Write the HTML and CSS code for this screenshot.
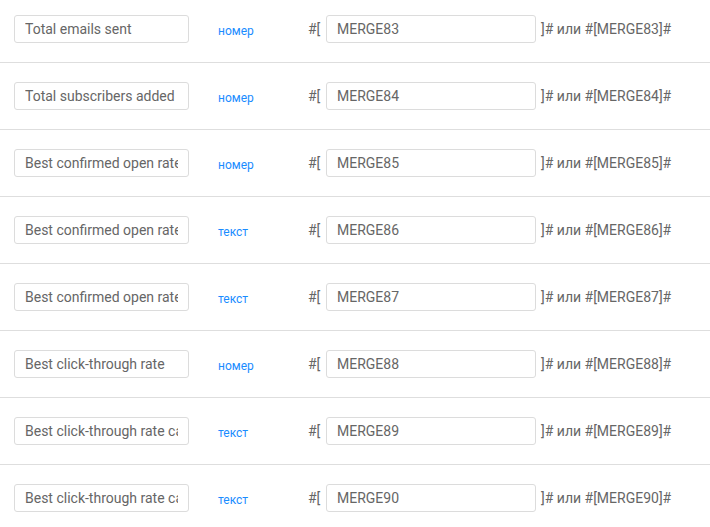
FILE: index.html
```html
<!DOCTYPE html>
<html lang="ru">
<head>
    <meta charset="UTF-8">
    <meta name="viewport" content="width=device-width, initial-scale=1.0">
    <title>Merge fields</title>
    <link rel="stylesheet" href="styles.css">
</head>
<body>
    <div class="fields">
        <div class="field-row">
            <input class="field-name" type="text" value="Total emails sent">
            <span class="field-type">номер</span>
            <span class="tag-open">#[</span>
            <input class="field-tag" type="text" value="MERGE83">
            <span class="tag-hint">]# или #[MERGE83]#</span>
        </div>
        <div class="field-row">
            <input class="field-name" type="text" value="Total subscribers added">
            <span class="field-type">номер</span>
            <span class="tag-open">#[</span>
            <input class="field-tag" type="text" value="MERGE84">
            <span class="tag-hint">]# или #[MERGE84]#</span>
        </div>
        <div class="field-row">
            <input class="field-name" type="text" value="Best confirmed open rate">
            <span class="field-type">номер</span>
            <span class="tag-open">#[</span>
            <input class="field-tag" type="text" value="MERGE85">
            <span class="tag-hint">]# или #[MERGE85]#</span>
        </div>
        <div class="field-row">
            <input class="field-name" type="text" value="Best confirmed open rate campaign">
            <span class="field-type">текст</span>
            <span class="tag-open">#[</span>
            <input class="field-tag" type="text" value="MERGE86">
            <span class="tag-hint">]# или #[MERGE86]#</span>
        </div>
        <div class="field-row">
            <input class="field-name" type="text" value="Best confirmed open rate date">
            <span class="field-type">текст</span>
            <span class="tag-open">#[</span>
            <input class="field-tag" type="text" value="MERGE87">
            <span class="tag-hint">]# или #[MERGE87]#</span>
        </div>
        <div class="field-row">
            <input class="field-name" type="text" value="Best click-through rate">
            <span class="field-type">номер</span>
            <span class="tag-open">#[</span>
            <input class="field-tag" type="text" value="MERGE88">
            <span class="tag-hint">]# или #[MERGE88]#</span>
        </div>
        <div class="field-row">
            <input class="field-name" type="text" value="Best click-through rate campaign">
            <span class="field-type">текст</span>
            <span class="tag-open">#[</span>
            <input class="field-tag" type="text" value="MERGE89">
            <span class="tag-hint">]# или #[MERGE89]#</span>
        </div>
        <div class="field-row">
            <input class="field-name" type="text" value="Best click-through rate campaign date">
            <span class="field-type">текст</span>
            <span class="tag-open">#[</span>
            <input class="field-tag" type="text" value="MERGE90">
            <span class="tag-hint">]# или #[MERGE90]#</span>
        </div>
    </div>
</body>
</html>
```

FILE: styles.css
```css
body {
    font-family: Roboto, "Liberation Sans", Arial, sans-serif;
    margin: 0;
    padding: 0;
    background-color: #fff;
    color: #666;
    overflow: hidden;
}
.fields {
    width: 710px;
}
.field-row {
    display: flex;
    align-items: center;
    padding: 19px 0 19px 14px;
    border-bottom: 1px solid #dedede;
    height: 28px;
}
.field-row:first-child {
    padding-top: 15px;
}
input {
    font-family: inherit;
    font-size: 14px;
    color: #666;
    height: 28px;
    box-sizing: border-box;
    border: 1px solid #dcdcdc;
    border-radius: 3px;
    padding: 0 10px;
    margin: 0;
    background: #fff;
    outline: none;
}
.field-name {
    width: 175px;
}
.field-type {
    width: 90px;
    margin-left: 29px;
    padding-top: 3px;
    font-size: 12px;
    color: #1a8cff;
}
.tag-open {
    width: 18px;
    font-size: 14px;
}
.field-tag {
    width: 210px;
}
.tag-hint {
    margin-left: 5px;
    font-size: 14px;
    white-space: nowrap;
}
```
